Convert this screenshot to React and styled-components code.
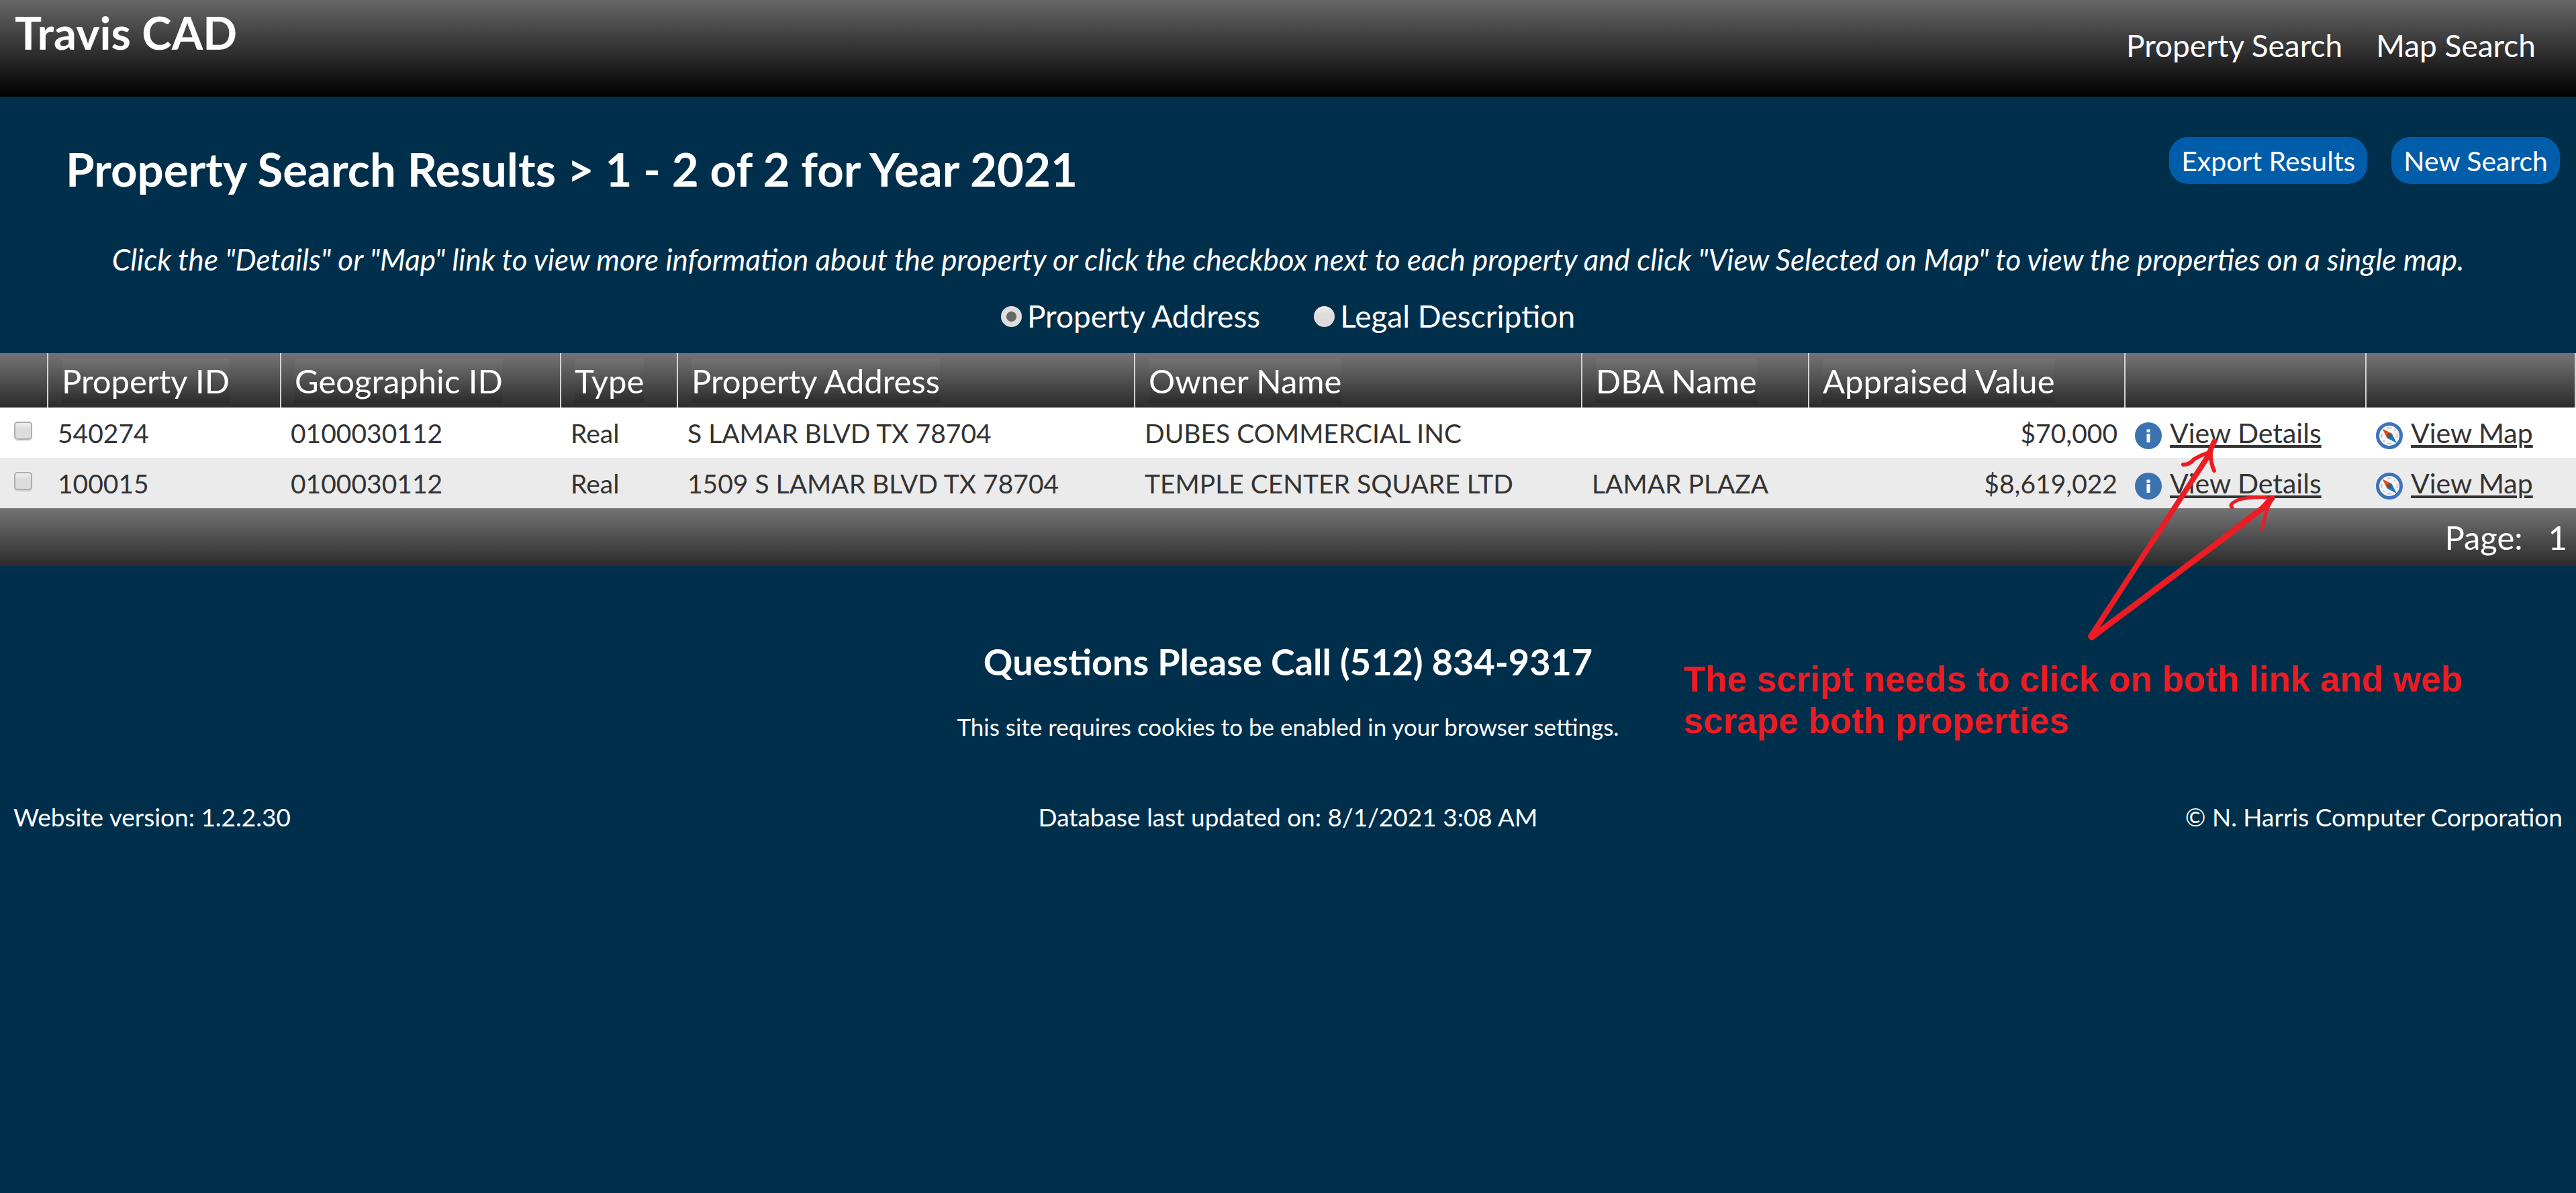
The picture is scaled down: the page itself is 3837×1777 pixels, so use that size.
import React, { useState } from "react";
import styled, { createGlobalStyle } from "styled-components";

const GlobalStyle = createGlobalStyle`
  * { box-sizing: border-box; }
  body {
    margin: 0;
    background: #002f4c;
    color: #fff;
    font-family: Lato, "Open Sans", sans-serif;
  }
`;

const barGradient = "linear-gradient(#747474, #2b2b2b)";

const Page = styled.div`
  position: relative;
  min-height: 100vh;
`;

const TopBar = styled.header`
  display: flex;
  justify-content: space-between;
  align-items: flex-start;
  height: 144px;
  padding: 8px 60px 0 22px;
  background: linear-gradient(#666, #000);
`;

const SiteName = styled.div`
  font-size: 67px;
  font-weight: 700;
  line-height: 80px;
`;

const Nav = styled.nav`
  display: flex;
  gap: 50px;
`;

const NavLink = styled.a`
  color: #fff;
  font-size: 46px;
  line-height: 120px;
  text-decoration: none;
`;

const HeadingRow = styled.div`
  display: flex;
  justify-content: space-between;
  align-items: flex-start;
  padding: 60px 24px 0 98px;
`;

const Heading = styled.h1`
  margin: 0;
  font-size: 69px;
  line-height: 96px;
`;

const Actions = styled.div`
  display: flex;
  gap: 36px;
`;

const ActionButton = styled.button`
  height: 70px;
  padding: 0 18px;
  border: 0;
  border-radius: 28px;
  background: #005daa;
  color: #fff;
  font: inherit;
  font-size: 41px;
`;

const Instructions = styled.p`
  margin: 54px 0 0;
  font-size: 44px;
  font-style: italic;
  line-height: 64px;
  text-align: center;
`;

const ViewOptions = styled.div`
  display: flex;
  justify-content: center;
  gap: 80px;
  padding: 21px 0 23px;
`;

const Option = styled.label`
  display: flex;
  align-items: center;
  gap: 8px;
  font-size: 46px;
  line-height: 64px;
`;

const Radio = styled.input`
  appearance: none;
  width: 31px;
  height: 31px;
  margin: 0;
  border-radius: 50%;
  background: linear-gradient(#f0f0f0, #dcdcdc 40%);
  &:checked {
    background: radial-gradient(circle, #666 7px, #dedede 8px);
  }
`;

const ResultsTable = styled.table`
  width: 100%;
  table-layout: fixed;
  border-collapse: separate;
  border-spacing: 0;
  color: #333;
`;

const HeadRow = styled.tr`
  height: 81px;
  background: ${barGradient};
`;

const HeadCell = styled.th`
  padding: 0 0 0 20px;
  border-right: 2px solid #d4d4d4;
  color: #fff;
  font-size: 49px;
  font-weight: 400;
  line-height: 66px;
  text-align: left;
`;

const HeadLabel = styled.span`
  display: inline-block;
  vertical-align: top;
  background: ${barGradient};
`;

const Row = styled.tr`
  height: 75px;
  background: #fff;
  &:nth-child(even) {
    background: #ebebeb;
  }
`;

const Cell = styled.td`
  padding: 0 12px 0 14px;
  font-size: 39px;
  line-height: 48px;
  text-align: ${(p) => (p.$right ? "right" : "left")};
  white-space: nowrap;
`;

const SelectCell = styled(Cell)`
  padding: 0 0 6px 21px;
`;

const Checkbox = styled.input`
  appearance: none;
  display: block;
  width: 27px;
  height: 27px;
  margin: 0;
  border: 2px solid #adadad;
  border-radius: 5px;
  background: linear-gradient(#efefef, #dcdcdc 40%);
  box-shadow: 0 2px 1px rgba(0, 0, 0, 0.12);
`;

const IconLink = styled.div`
  display: flex;
  align-items: flex-end;
  gap: 12px;
`;

const TextLink = styled.a`
  color: #333;
  font-size: 41px;
  text-decoration: underline;
  text-decoration-thickness: 4px;
  text-underline-offset: 3px;
`;

const Icon = styled.svg`
  display: block;
  flex: none;
  width: 40px;
  height: 40px;
`;

const Pager = styled.div`
  display: flex;
  justify-content: flex-end;
  gap: 38px;
  padding-right: 13px;
  background: ${barGradient};
  font-size: 49px;
  line-height: 86px;
`;

const Questions = styled.h2`
  margin: 107px 0 0;
  font-size: 54px;
  line-height: 72px;
  text-align: center;
`;

const Notice = styled.p`
  margin: 36px 0 87px;
  font-size: 35px;
  line-height: 48px;
  text-align: center;
`;

const Footer = styled.footer`
  display: grid;
  grid-template-columns: 1fr auto 1fr;
  padding: 0 20px;
  font-size: 37px;
  line-height: 48px;
  & > :last-child {
    text-align: right;
  }
`;

/* Hand-made markup laid over the page, anchored to the link columns. */
const Arrows = styled.svg`
  position: absolute;
  top: 640px;
  right: 437px;
  width: 300px;
  height: 330px;
  pointer-events: none;
`;

const Remark = styled.p`
  position: absolute;
  top: 981px;
  right: 129px;
  width: 1200px;
  margin: 0;
  color: #ed1c24;
  font-family: "Liberation Sans", Arial, sans-serif;
  font-size: 53px;
  font-weight: 700;
  line-height: 62px;
`;

const InfoIcon = () => (
  <Icon viewBox="0 0 40 40" aria-hidden="true">
    <circle cx="20" cy="20" r="20" fill="#3b73b1" />
    <path d="M17.500 10.500h5v4.500h-5zM17.500 17h5v13h-5z" fill="#fff" />
  </Icon>
);

const CompassIcon = () => (
  <Icon viewBox="0 0 40 40" aria-hidden="true">
    <circle cx="20" cy="20" r="17.500" fill="#f6f6f6" stroke="#3c73ba" strokeWidth="5" />
    <path
      d="M17 8.500h6M17 31.500h6M8.500 17v6M31.500 17v6M27 11l2 2M11 27l2 2"
      stroke="#c4c4c4"
      strokeWidth="2"
    />
    <path d="M9.500 9.500L23.500 16.500L16.500 23.500Z" fill="#e0521c" />
    <path d="M31 31L16.500 23.500L23.500 16.500Z" fill="#1b76d2" />
    <circle cx="20" cy="20" r="3.500" fill="#55555a" />
  </Icon>
);

const columns = [
  { label: "", width: 72 },
  { label: "Property ID", width: 347 },
  { label: "Geographic ID", width: 417 },
  { label: "Type", width: 174 },
  { label: "Property Address" },
  { label: "Owner Name", width: 666 },
  { label: "DBA Name", width: 338 },
  { label: "Appraised Value", width: 471 },
  { label: "", width: 359 },
  { label: "", width: 312 },
];

const rows = [
  ["540274", "0100030112", "Real", "S LAMAR BLVD TX 78704", "DUBES COMMERCIAL INC", "", "$70,000"],
  ["100015", "0100030112", "Real", "1509 S LAMAR BLVD TX 78704", "TEMPLE CENTER SQUARE LTD", "LAMAR PLAZA", "$8,619,022"],
];

const Col = styled.col`
  width: ${(p) => (p.$width ? `${p.$width}px` : "auto")};
`;

export default function App() {
  const [view, setView] = useState("Property Address");
  return (
    <Page>
      <GlobalStyle />
      <TopBar>
        <SiteName>Travis CAD</SiteName>
        <Nav>
          <NavLink href="#property">Property Search</NavLink>
          <NavLink href="#map">Map Search</NavLink>
        </Nav>
      </TopBar>
      <main>
        <HeadingRow>
          <Heading>Property Search Results &gt; 1 - 2 of 2 for Year 2021</Heading>
          <Actions>
            <ActionButton type="button">Export Results</ActionButton>
            <ActionButton type="button">New Search</ActionButton>
          </Actions>
        </HeadingRow>
        <Instructions>
          Click the "Details" or "Map" link to view more information about the property or click the
          checkbox next to each property and click "View Selected on Map" to view the properties on a
          single map.
        </Instructions>
        <ViewOptions>
          {["Property Address", "Legal Description"].map((name) => (
            <Option key={name}>
              <Radio type="radio" name="view" checked={view === name} onChange={() => setView(name)} />
              {name}
            </Option>
          ))}
        </ViewOptions>
        <ResultsTable>
          <colgroup>
            {columns.map((c, i) => (
              <Col key={i} $width={c.width} />
            ))}
          </colgroup>
          <thead>
            <HeadRow>
              {columns.map((c, i) => (
                <HeadCell key={i}>{c.label && <HeadLabel>{c.label}</HeadLabel>}</HeadCell>
              ))}
            </HeadRow>
          </thead>
          <tbody>
            {rows.map((row) => (
              <Row key={row[0]}>
                <SelectCell>
                  <Checkbox type="checkbox" aria-label={`Select ${row[0]}`} />
                </SelectCell>
                {row.map((value, i) => (
                  <Cell key={i} $right={i === 6}>
                    {value}
                  </Cell>
                ))}
                <Cell>
                  <IconLink>
                    <InfoIcon />
                    <TextLink href="#details">View Details</TextLink>
                  </IconLink>
                </Cell>
                <Cell>
                  <IconLink>
                    <CompassIcon />
                    <TextLink href="#view-map">View Map</TextLink>
                  </IconLink>
                </Cell>
              </Row>
            ))}
          </tbody>
        </ResultsTable>
        <Pager>
          <span>Page:</span>
          <span>1</span>
        </Pager>
        <Questions>Questions Please Call (512) 834-9317</Questions>
        <Notice>This site requires cookies to be enabled in your browser settings.</Notice>
      </main>
      <Footer>
        <span>Website version: 1.2.2.30</span>
        <span>Database last updated on: 8/1/2021 3:08 AM</span>
        <span>© N. Harris Computer Corporation</span>
      </Footer>
      <Arrows viewBox="3100 640 300 330" fill="none" stroke="#ed1c24" strokeLinecap="round" strokeLinejoin="round" aria-hidden="true">
        <path d="M3114 948L3288 681L3298 658" strokeWidth="8" />
        <path d="M3252 692Q3262 692 3268 684Q3278 678 3290 674M3293 672Q3292 688 3298 701" strokeWidth="6" />
        <path d="M3116 949L3300 811L3370 757L3384 742" strokeWidth="9" />
        <path d="M3325 756Q3319 752 3331 746Q3344 740 3376 741M3384 744Q3374 762 3373 774Q3370 782 3369 788" strokeWidth="5" />
      </Arrows>
      <Remark>
        The script needs to click on both link and web
        <br />
        scrape both properties
      </Remark>
    </Page>
  );
}
